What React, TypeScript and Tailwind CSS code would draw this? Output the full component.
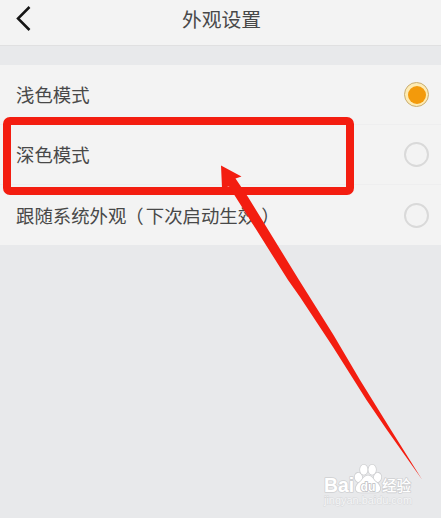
import type { ReactNode } from 'react';

const font = "font-['Noto_Sans_CJK_SC','Liberation_Sans',sans-serif]";

function Radio({ checked = false }: { checked?: boolean }) {
  return checked ? (
    <span className="flex size-[25px] items-center justify-center rounded-full border border-[#c9ad72] bg-[#fdebb4]">
      <span className="size-[18px] rounded-full bg-[#f39a0b]" />
    </span>
  ) : (
    <span className="size-[25px] rounded-full border-2 border-[#d9d9d9]" />
  );
}

function Row({ label, checked, last }: { label: ReactNode; checked?: boolean; last?: boolean }) {
  return (
    <div
      className={`flex h-[60px] items-center justify-between pr-3 pl-4 ${last ? '' : 'border-b border-[#eeeeef]'}`}
    >
      <span className="pb-px text-[18.4px] leading-[28px] whitespace-nowrap">{label}</span>
      <Radio checked={checked} />
    </div>
  );
}

function Watermark() {
  return (
    <svg
      className="absolute top-[460px] left-[320px]"
      width="100"
      height="50"
      viewBox="0 0 100 50"
      fontFamily="'Liberation Sans','Noto Sans CJK SC',sans-serif"
    >
      <text x="4" y="43.500" fontSize="10.5" fill="#f5f6f7" stroke="#d8d9db" strokeWidth="1" paintOrder="stroke" textLength="88" lengthAdjust="spacingAndGlyphs">jingyan.baidu.com</text>
      <g fill="#fff" stroke="#cfd0d2" strokeWidth="1.6" paintOrder="stroke" strokeLinejoin="round">
        <text x="4" y="31.500" fontSize="20" fontWeight="700" textLength="30" lengthAdjust="spacingAndGlyphs">Bai</text>
        <ellipse cx="38.5" cy="17.500" rx="3.7" ry="4.7" transform="rotate(-12 38.5 17.5)" />
        <ellipse cx="43.800" cy="9.800" rx="3.7" ry="5" />
        <ellipse cx="52.200" cy="9.800" rx="3.7" ry="5" />
        <ellipse cx="57.500" cy="17.500" rx="3.7" ry="4.7" transform="rotate(12 57.5 17.5)" />
        <path d="M48 15.500c-4 0-5 4-8 6.500c-5.500 4-6 10.500 1 10.500h14c7 0 6.500-6.500 1-10.500c-3-2.500-4-6.500-8-6.500Z" />
        <text x="62" y="31" fontSize="15" fontWeight="500" textLength="29" lengthAdjust="spacingAndGlyphs">经验</text>
      </g>
      <text x="40.500" y="31" fontSize="13" fontWeight="700" fill="#fff" stroke="#bcbdbf" strokeWidth="1.6" paintOrder="stroke" textLength="15" lengthAdjust="spacingAndGlyphs">du</text>
    </svg>
  );
}

export default function App() {
  return (
    <div className={`relative h-[518px] w-[441px] overflow-hidden bg-[#e8e9eb] text-[#484848] ${font}`}>
      <header className="grid h-[46px] grid-cols-[44px_1fr_42px] items-start border-b border-[#e0e0e1] bg-[#f3f3f3]">
        <svg className="h-[38px] w-[44px]" viewBox="0 0 44 38" fill="none" stroke="#151515" strokeWidth="2.5">
          <path d="M29.500 7 18 18.500 29.500 30" />
        </svg>
        <h1 className="text-center text-[19.8px] leading-[38px]">外观设置</h1>
      </header>
      <main className="mt-[19px] bg-[#f3f3f3]">
        <Row label="浅色模式" checked />
        <Row label="深色模式" />
        <Row
          label={
            <>
              跟随系统外观<span className="mr-[2px] -ml-px">（</span>下次启动生效<span className="ml-[5px]">）</span>
            </>
          }
          last
        />
      </main>
      <div className="absolute top-[117px] left-[3px] h-[78px] w-[351px] rounded-[7px] border-8 border-[#f31d10]" />
      <Watermark />
      <svg className="absolute inset-0" width="441" height="518" viewBox="0 0 441 518">
        <path
          d="M221 165.500 241.500 176.500 235.500 178.500 248 197 299 280 333.500 335 360 380 391 430 422 479.500 387 430 366.500 400 333 347 300 297 288 280 235 196 229 186.500 222 188Z"
          fill="#f31d10"
        />
      </svg>
    </div>
  );
}
